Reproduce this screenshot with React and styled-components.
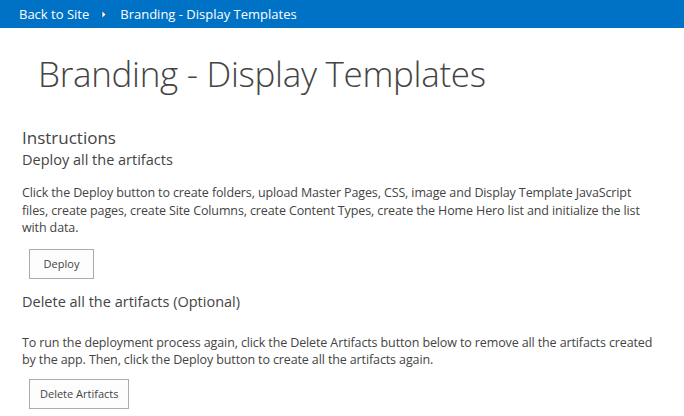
import React from 'react';
import styled, { createGlobalStyle } from 'styled-components';

const GlobalStyle = createGlobalStyle`
  html, body {
    margin: 0;
    padding: 0;
    background: #ffffff;
  }
  body {
    font-family: "Open Sans", "Noto Sans", "Liberation Sans", sans-serif;
    color: #444444;
  }
`;

const Page = styled.div`
  width: 684px;
  min-height: 416px;
  overflow: hidden;
`;

const TopBar = styled.nav`
  display: flex;
  align-items: center;
  height: 28px;
  padding: 0 19px;
  background-color: #0072c6;
  color: #ffffff;
  font-size: 13px;
`;

const NavLink = styled.span`
  color: #ffffff;
  white-space: nowrap;
`;

const Separator = styled.span`
  display: flex;
  align-items: center;
  margin: 0 13px 0 12px;
`;

const Content = styled.main`
  display: flex;
  flex-direction: column;
  padding: 0 20px 0 22px;
`;

const PageTitle = styled.h1`
  margin: 22px 0 0 16px;
  font-size: 35px;
  font-weight: 300;
  line-height: 48px;
  color: #444444;
  letter-spacing: -0.3px;
`;

const SectionTitle = styled.h2`
  margin: 30px 0 0;
  font-size: 17px;
  font-weight: 400;
  line-height: 20px;
  color: #444444;
`;

const SubTitle = styled.h3`
  margin: ${props => props.$top || 2}px 0 0;
  font-size: 14.5px;
  font-weight: 400;
  line-height: 20px;
  color: #444444;
`;

const Text = styled.p`
  margin: ${props => props.$top || 14}px 0 0;
  max-width: 634px;
  font-size: 12.5px;
  line-height: 17.5px;
  letter-spacing: -0.12px;
  color: #444444;
`;

const Button = styled.button`
  align-self: flex-start;
  margin: ${props => props.$top || 12}px 0 0 7px;
  min-width: 65px;
  height: 30px;
  padding: 0 10px;
  background: #fdfdfd;
  border: 1px solid #ababab;
  font-family: inherit;
  font-size: 11px;
  color: #444444;
  cursor: pointer;
`;

const Arrow = () => (
  <svg width="6" height="9" viewBox="0 0 6 9">
    <path d="M1 0.8 L5 4.5 L1 8.2 Z" fill="#ffffff" stroke="#1b3d66" strokeWidth="0.6" />
  </svg>
);

const App = () => {
  return (
    <Page>
      <GlobalStyle />
      <TopBar>
        <NavLink>Back to Site</NavLink>
        <Separator>
          <Arrow />
        </Separator>
        <NavLink>Branding - Display Templates</NavLink>
      </TopBar>
      <Content>
        <PageTitle>Branding - Display Templates</PageTitle>

        <SectionTitle>Instructions</SectionTitle>
        <SubTitle>Deploy all the artifacts</SubTitle>
        <Text>
          Click the Deploy button to create folders, upload Master Pages, CSS, image and Display Template JavaScript
          files, create pages, create Site Columns, create Content Types, create the Home Hero list and initialize the list
          with data.
        </Text>
        <Button>Deploy</Button>

        <SubTitle $top={13}>Delete all the artifacts (Optional)</SubTitle>
        <Text $top={22}>
          To run the deployment process again, click the Delete Artifacts button below to remove all the artifacts created
          by the app. Then, click the Deploy button to create all the artifacts again.
        </Text>
        <Button $top={10}>Delete Artifacts</Button>
      </Content>
    </Page>
  );
};

export default App;
